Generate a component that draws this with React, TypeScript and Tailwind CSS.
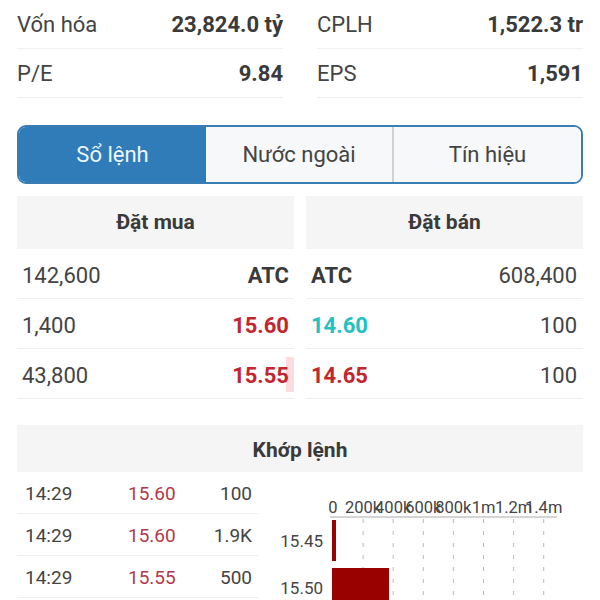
import React from "react";

const stats = [
  [
    { label: "Vốn hóa", value: "23,824.0 tỷ" },
    { label: "P/E", value: "9.84" },
  ],
  [
    { label: "CPLH", value: "1,522.3 tr" },
    { label: "EPS", value: "1,591" },
  ],
];

const trades = [
  { time: "14:29", price: "15.60", vol: "100" },
  { time: "14:29", price: "15.60", vol: "1.9K" },
  { time: "14:29", price: "15.55", vol: "500" },
];

const ticks = ["0", "200k", "400k", "600k", "800k", "1m", "1.2m", "1.4m"];

function VolumeChart() {
  const x0 = 75;
  const step = 30.1;
  return (
    <svg width="342" height="128" className="block">
      {ticks.map((t, i) => (
        <text
          key={t}
          x={x0 + i * step}
          y={41}
          textAnchor="middle"
          fontSize="16.5"
          fill="#444"
          fontFamily="Roboto, sans-serif"
        >
          {t}
        </text>
      ))}
      <line x1={72} y1={45} x2={299} y2={45} stroke="#aaa" strokeWidth="1" />
      {ticks.slice(1).map((t, i) => (
        <line
          key={t}
          x1={x0 + (i + 1) * step}
          y1={47}
          x2={x0 + (i + 1) * step}
          y2={128}
          stroke="#bbb"
          strokeWidth="1"
          strokeDasharray="4 8"
        />
      ))}
      <rect x={74} y={48} width={4} height={41} fill="#990000" />
      <rect x={74} y={96} width={57} height={41} fill="#990000" />
      <text x={65} y={75} textAnchor="end" fontSize="17" fill="#444" fontFamily="Roboto, sans-serif">
        15.45
      </text>
      <text x={65} y={122} textAnchor="end" fontSize="17" fill="#444" fontFamily="Roboto, sans-serif">
        15.50
      </text>
    </svg>
  );
}

export default function App() {
  return (
    <div className="w-[600px] h-[600px] overflow-hidden bg-white font-['Roboto',sans-serif] text-[#3a3a3a]">
      {/* stats */}
      <div className="grid grid-cols-2 gap-x-[34px] px-[17px]">
        {stats.map((col, ci) => (
          <div key={ci} className="flex flex-col">
            {col.map((s) => (
              <div key={s.label} className="h-[49px] flex items-center justify-between border-b border-[#efefef] text-[22px]">
                <span className="text-[#444]">{s.label}</span>
                <span className="font-bold text-[#3a3a3a]">{s.value}</span>
              </div>
            ))}
          </div>
        ))}
      </div>

      {/* tabs */}
      <div className="mx-[17px] mt-[27px] h-[59px] flex rounded-[9px] border-2 border-[#3a7db4] overflow-hidden text-[22px]">
        <div className="w-[187px] flex items-center justify-center bg-[#2f7cb9] text-[#eef6ff]">Sổ lệnh</div>
        <div className="w-[188px] flex items-center justify-center bg-[#f7f8fa] text-[#444] border-r-2 border-[#cfd3d6]">Nước ngoài</div>
        <div className="flex-1 flex items-center justify-center bg-[#f7f8fa] text-[#444]">Tín hiệu</div>
      </div>

      {/* order book */}
      <div className="grid grid-cols-2 gap-x-[12px] px-[17px] mt-[12px] text-[22px]">
        <div className="flex flex-col">
          <div className="h-[53px] flex items-center justify-center bg-[#f5f5f5] font-bold text-[21px] text-[#3a3a3a]">Đặt mua</div>
          <div className="h-[50px] flex items-center justify-between px-[5px] pt-[3px] border-b border-[#efefef]">
            <span className="text-[#444]">142,600</span>
            <span className="font-bold text-[#3a3a3a]">ATC</span>
          </div>
          <div className="h-[50px] flex items-center justify-between px-[5px] pt-[3px] border-b border-[#efefef]">
            <span className="text-[#444]">1,400</span>
            <span className="font-bold text-[#c2262e]">15.60</span>
          </div>
          <div className="relative h-[50px] flex items-center justify-between px-[5px] pt-[3px] border-b border-[#efefef]">
            <div className="absolute right-0 top-[8px] bottom-[6px] w-[8px] bg-[#fcdcdc]" />
            <span className="relative text-[#444]">43,800</span>
            <span className="relative font-bold text-[#c2262e]">15.55</span>
          </div>
        </div>
        <div className="flex flex-col">
          <div className="h-[53px] flex items-center justify-center bg-[#f5f5f5] font-bold text-[21px] text-[#3a3a3a]">Đặt bán</div>
          <div className="h-[50px] flex items-center justify-between pl-[5px] pr-[6px] pt-[3px] border-b border-[#efefef]">
            <span className="font-bold text-[#3a3a3a]">ATC</span>
            <span className="text-[#444]">608,400</span>
          </div>
          <div className="h-[50px] flex items-center justify-between pl-[5px] pr-[6px] pt-[3px] border-b border-[#efefef]">
            <span className="font-bold text-[#22c1c3]">14.60</span>
            <span className="text-[#444]">100</span>
          </div>
          <div className="h-[50px] flex items-center justify-between pl-[5px] pr-[6px] pt-[3px] border-b border-[#efefef]">
            <span className="font-bold text-[#c2262e]">14.65</span>
            <span className="text-[#444]">100</span>
          </div>
        </div>
      </div>

      {/* matched */}
      <div className="mx-[17px] mt-[26px] h-[47px] pt-[4px] flex items-center justify-center bg-[#f5f5f5] font-bold text-[21px] text-[#3a3a3a]">
        Khớp lệnh
      </div>
      <div className="flex">
        <div className="ml-[17px] w-[241px] flex flex-col text-[19px]">
          {trades.map((t, i) => (
            <div key={i} className="h-[42px] pt-[4px] flex items-center border-b border-[#efefef] text-[#444]">
              <span className="w-[111px] pl-[8px]">{t.time}</span>
              <span className="text-[#b2394a]">{t.price}</span>
              <span className="flex-1 text-right pr-[6px]">{t.vol}</span>
            </div>
          ))}
        </div>
        <VolumeChart />
      </div>
    </div>
  );
}
